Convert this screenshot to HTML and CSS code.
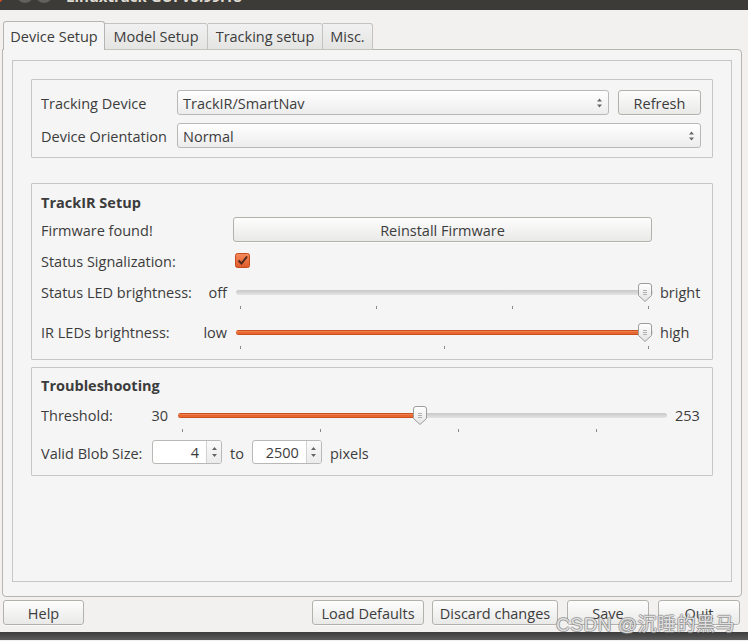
FILE: index.html
```html
<!DOCTYPE html>
<html>

<head>
    <title>Linuxtrack GUI v0.99.18</title>
    <meta charset="utf-8">
    <meta name="viewport" content="width=device-width, initial-scale=1.0">
    <link rel="stylesheet" href="styles.css">
</head>

<body>

    <header class="titlebar">
        <span class="knap luk"></span>
        <span class="knap"></span>
        <span class="knap"></span>
        <span class="titel">Linuxtrack GUI v0.99.18</span>
    </header>

    <nav class="faner">
        <button class="fane valgt">Device Setup</button>
        <button class="fane model">Model Setup</button>
        <button class="fane tracking">Tracking setup</button>
        <button class="fane misc">Misc.</button>
    </nav>

    <main class="rude">
        <div class="ramme">

            <section class="gruppe enhed">
                <div class="linje">
                    <label class="etiket">Tracking Device</label>
                    <div class="combo kort">TrackIR/SmartNav
                        <svg class="pile" width="7" height="12" viewBox="0 0 7 12"><path d="M1 4.5 L3.5 1.5 L6 4.5 Z M1 7.5 L3.5 10.5 L6 7.5 Z" /></svg>
                    </div>
                    <button class="knap-std refresh">Refresh</button>
                </div>
                <div class="linje">
                    <label class="etiket">Device Orientation</label>
                    <div class="combo lang">Normal
                        <svg class="pile" width="7" height="12" viewBox="0 0 7 12"><path d="M1 4.5 L3.5 1.5 L6 4.5 Z M1 7.5 L3.5 10.5 L6 7.5 Z" /></svg>
                    </div>
                </div>
            </section>

            <section class="gruppe trackir">
                <h2>TrackIR Setup</h2>
                <div class="linje firmware">
                    <label class="fw-etiket">Firmware found!</label>
                    <button class="knap-std reinstall">Reinstall Firmware</button>
                </div>
                <div class="linje status">
                    <label class="st-etiket">Status Signalization:</label>
                    <svg class="afkryds" width="15" height="15" viewBox="0 0 15 15">
                        <defs>
                            <linearGradient id="orange" x1="0" y1="0" x2="0" y2="1">
                                <stop offset="0" stop-color="#f58b5c" />
                                <stop offset="1" stop-color="#e0592a" />
                            </linearGradient>
                        </defs>
                        <rect x="0.5" y="0.5" width="14" height="14" rx="2" fill="url(#orange)" stroke="#c64c1e" />
                        <path d="M3.5 7.5 L6.5 10.5 L12 3.5" fill="none" stroke="#4a2a1e" stroke-width="2" />
                    </svg>
                </div>
                <div class="linje glider-linje">
                    <label class="lbl2">Status LED brightness:</label>
                    <span class="min">off</span>
                    <div class="slider">
                        <div class="groove"><div class="fill" style="width: 410px"></div></div>
                        <svg class="handle" style="left: 402px" width="14" height="19" viewBox="0 0 14 19">
                            <defs>
                                <linearGradient id="hvid" x1="0" y1="0" x2="0" y2="1">
                                    <stop offset="0" stop-color="#ffffff" />
                                    <stop offset="1" stop-color="#e4e4e4" />
                                </linearGradient>
                            </defs>
                            <path d="M3 0.5 H11 Q13.5 0.5 13.5 3 V12.5 L7 18.5 L0.5 12.5 V3 Q0.5 0.5 3 0.5 Z" fill="url(#hvid)" stroke="#9c9c9c" />
                            <path d="M5 7.5 H9 M5 9.5 H9 M5 11.5 H9" stroke="#b0b0b0" />
                        </svg>
                        <div class="ticks"><i></i><i></i><i></i><i></i></div>
                    </div>
                    <span class="max">bright</span>
                </div>
                <div class="linje glider-linje ir">
                    <label class="lbl2">IR LEDs brightness:</label>
                    <span class="min">low</span>
                    <div class="slider">
                        <div class="groove orangeg"><div class="fill" style="width: 410px"></div></div>
                        <svg class="handle" style="left: 402px" width="14" height="19" viewBox="0 0 14 19">
                            <path d="M3 0.5 H11 Q13.5 0.5 13.5 3 V12.5 L7 18.5 L0.5 12.5 V3 Q0.5 0.5 3 0.5 Z" fill="url(#hvid)" stroke="#9c9c9c" />
                            <path d="M5 7.5 H9 M5 9.5 H9 M5 11.5 H9" stroke="#b0b0b0" />
                        </svg>
                        <div class="ticks"><i></i><i></i><i></i></div>
                    </div>
                    <span class="max">high</span>
                </div>
            </section>

            <section class="gruppe fejl">
                <h2>Troubleshooting</h2>
                <div class="linje glider-linje">
                    <label class="th-etiket">Threshold:</label>
                    <span class="th-min">30</span>
                    <div class="slider lang-slider">
                        <div class="groove"><div class="fill" style="width: 240px"></div></div>
                        <svg class="handle" style="left: 235px" width="14" height="19" viewBox="0 0 14 19">
                            <path d="M3 0.5 H11 Q13.5 0.5 13.5 3 V12.5 L7 18.5 L0.5 12.5 V3 Q0.5 0.5 3 0.5 Z" fill="url(#hvid)" stroke="#9c9c9c" />
                            <path d="M5 7.5 H9 M5 9.5 H9 M5 11.5 H9" stroke="#b0b0b0" />
                        </svg>
                        <div class="ticks fast"><i></i><i></i><i></i><i></i></div>
                    </div>
                    <span class="th-max">253</span>
                </div>
                <div class="linje blob">
                    <label class="bl-etiket">Valid Blob Size:</label>
                    <div class="spin">
                        <span class="tal">4</span>
                        <span class="spin-pile">
                            <svg width="7" height="14" viewBox="0 0 7 14"><path d="M1 5 L3.5 2 L6 5 Z M1 9 L3.5 12 L6 9 Z" /></svg>
                        </span>
                    </div>
                    <span class="til">to</span>
                    <div class="spin">
                        <span class="tal">2500</span>
                        <span class="spin-pile">
                            <svg width="7" height="14" viewBox="0 0 7 14"><path d="M1 5 L3.5 2 L6 5 Z M1 9 L3.5 12 L6 9 Z" /></svg>
                        </span>
                    </div>
                    <span class="pixels">pixels</span>
                </div>
            </section>

        </div>
    </main>

    <footer class="knapper">
        <button class="knap-std help">Help</button>
        <span class="fyld"></span>
        <button class="knap-std defaults">Load Defaults</button>
        <button class="knap-std discard">Discard changes</button>
        <button class="knap-std save">Save</button>
        <button class="knap-std quit">Quit</button>
    </footer>

    <div class="bund"></div>

    <div class="vandmaerke">CSDN @沉睡的黑马</div>

</body>

</html>
```

FILE: styles.css
```css
* {
    box-sizing: border-box;
}

body {
    margin: 0;
    width: 748px;
    height: 641px;
    overflow: hidden;
    position: relative;
    background-color: #f2f1f0;
    font-family: "Open Sans", "DejaVu Sans", sans-serif;
    font-size: 14.5px;
    color: #3c3c3c;
}

button {
    font-family: inherit;
    font-size: inherit;
    color: inherit;
}

/* TITLE BAR */

.titlebar {
    height: 10px;
    overflow: hidden;
    background-color: #3c3b37;
    display: flex;
    align-items: flex-end;
}

.knap {
    width: 16px;
    height: 16px;
    border-radius: 50%;
    margin-bottom: 7px;
    margin-right: 3px;
    flex-shrink: 0;
    background: linear-gradient(#7d7c78, #5e5d59);
}

.knap.luk {
    margin-left: -12px;
    margin-right: 13px;
    background: linear-gradient(#f7774a, #e0491b);
}

.titel {
    margin-left: 11px;
    margin-bottom: 6px;
    font-size: 15px;
    line-height: 15px;
    font-weight: bold;
    color: #dfdbd2;
    white-space: nowrap;
}

/* TABS */

.faner {
    height: 40px;
    display: flex;
    align-items: flex-end;
    padding-left: 3px;
    position: relative;
    z-index: 1;
    margin-bottom: -1px;
}

.fane {
    height: 27px;
    padding: 0;
    border: 1px solid #c3c2bf;
    border-left: none;
    border-radius: 0 3px 0 0;
    background: linear-gradient(#f1f1f1, #e4e4e3);
    text-align: center;
    line-height: 24px;
}

.fane.valgt {
    width: 102px;
    height: 29px;
    border: 1px solid #b6b5b2;
    border-bottom: none;
    border-radius: 3px 3px 0 0;
    background: #f5f5f5;
    line-height: 27px;
}

.fane.model {
    width: 103px;
}

.fane.tracking {
    width: 115px;
}

.fane.misc {
    width: 50px;
}

/* PANE */

.rude {
    margin-left: 2px;
    width: 740px;
    height: 548px;
    border: 1px solid #b6b5b2;
    border-radius: 0 4px 4px 4px;
    background-color: #f5f5f5;
    padding: 10px 9px 14px 9px;
}

.ramme {
    height: 522px;
    border: 1px solid #c6c6c6;
    padding: 18px 18px 0 18px;
}

.gruppe {
    width: 682px;
    border: 1px solid #c6c6c6;
    border-radius: 1px;
}

.gruppe h2 {
    margin: 0;
    height: 18px;
    padding-top: 1px;
    font-size: 14.5px;
    line-height: 18px;
    font-weight: bold;
}

.linje {
    display: flex;
    align-items: center;
}

.linje > label,
.linje > span,
.combo,
.knap-std,
.tal {
    padding-top: 2px;
}

/* GROUP 1 */

.enhed {
    padding: 10px 10px 9px 9px;
    display: flex;
    flex-direction: column;
    gap: 8px;
}

.etiket {
    width: 136px;
    white-space: nowrap;
}

.combo {
    height: 25px;
    border: 1px solid #b9b8b5;
    border-radius: 3px;
    background: linear-gradient(#ffffff, #ececec);
    padding-left: 5px;
    line-height: 21px;
    display: flex;
    justify-content: space-between;
    align-items: center;
}

.combo.kort {
    width: 432px;
}

.combo.lang {
    width: 524px;
}

.pile {
    margin-right: 5px;
    margin-top: -2px;
    fill: #666;
}

.knap-std {
    height: 25px;
    padding-left: 0;
    padding-right: 0;
    border: 1px solid #b3b1ac;
    border-radius: 3px;
    background: linear-gradient(#fdfdfd, #e9e9e8);
    box-shadow: 0 1px 0 rgba(255, 255, 255, 0.6);
    text-align: center;
    white-space: nowrap;
}

.refresh {
    width: 83px;
    margin-left: 9px;
}

/* GROUP 2 */

.trackir {
    margin-top: 25px;
    padding: 9px 10px 8px 9px;
}

.firmware {
    margin-top: 6px;
}

.fw-etiket {
    width: 192px;
}

.reinstall {
    width: 419px;
}

.status {
    margin-top: 7px;
    height: 22px;
}

.st-etiket {
    width: 194px;
}

.afkryds {
    display: block;
}

.glider-linje {
    margin-top: 10px;
    height: 30px;
    align-items: flex-start;
    line-height: 22px;
}

.glider-linje > label,
.glider-linje > span {
    padding-top: 1px;
}

.lbl2 {
    width: 155px;
    white-space: nowrap;
}

.min {
    width: 31px;
    text-align: right;
    margin-right: 9px;
}

.max {
    margin-left: 7px;
}

.slider {
    position: relative;
    width: 417px;
    height: 30px;
}

.groove {
    position: absolute;
    top: 9px;
    left: 0;
    right: 0;
    height: 5px;
    border-radius: 3px;
    background: linear-gradient(#c8c8c8, #e4e4e4);
    overflow: hidden;
}

.fill {
    height: 100%;
}

.groove .fill {
    background: transparent;
}

.orangeg .fill,
.lang-slider .fill {
    background: linear-gradient(#c9501f 0, #c9501f 1px, #f07f4c 1px, #f07f4c 2px, #e86630 2px, #e86630 4px, #c9501f 4px);
}

.handle {
    position: absolute;
    top: 2px;
}

.ticks {
    position: absolute;
    top: 25px;
    left: 0;
    right: 0;
    padding: 0 4px;
    display: flex;
    justify-content: space-between;
}

.ticks i {
    display: block;
    width: 1px;
    height: 3px;
    background-color: #8a8a8a;
}

.ticks.fast {
    justify-content: flex-start;
    gap: 137px;
}

/* GROUP 3 */

.fejl {
    margin-top: 7px;
    padding: 8px 10px 11px 9px;
}

.th-etiket {
    width: 110px;
}

.th-min {
    width: 17px;
    text-align: right;
    margin-right: 10px;
}

.slider.lang-slider {
    width: 489px;
}

.th-max {
    margin-left: 8px;
}

.blob {
    margin-top: 6px;
    height: 24px;
}

.bl-etiket {
    width: 111px;
}

.spin {
    width: 70px;
    height: 24px;
    border: 1px solid #b9b8b5;
    border-radius: 3px;
    background: #ffffff;
    display: flex;
    overflow: hidden;
}

.tal {
    flex: 1;
    text-align: right;
    padding-right: 7px;
    line-height: 20px;
}

.spin-pile {
    width: 15px;
    border-left: 1px solid #d2d2d2;
    background: linear-gradient(#fafafa, #ebebeb);
    display: flex;
    align-items: center;
    justify-content: center;
    fill: #666;
}

.til {
    margin: 0 8px;
}

.pixels {
    margin-left: 8px;
}

/* BUTTONS */

.knapper {
    margin-top: 3px;
    height: 25px;
    display: flex;
    padding: 0 8px 0 3px;
}

.fyld {
    flex: 1;
}

.help {
    width: 81px;
}

.defaults {
    width: 112px;
}

.discard {
    width: 126px;
    margin-left: 8px;
}

.save {
    width: 82px;
    margin-left: 9px;
}

.quit {
    width: 82px;
    margin-left: 9px;
}

.bund {
    margin-top: 7px;
    height: 8px;
    background: linear-gradient(#3d3d3d, #5c5c5c);
}

.vandmaerke {
    position: absolute;
    right: 13px;
    top: 609px;
    font-family: "Liberation Sans", "Noto Sans CJK SC", sans-serif;
    font-size: 19px;
    letter-spacing: 0.5px;
    color: rgba(255, 255, 255, 0.75);
    text-shadow: -1px 0 0 rgba(120, 120, 120, 0.6), 1px 0 0 rgba(120, 120, 120, 0.6), 0 -1px 0 rgba(120, 120, 120, 0.6), 0 1px 0 rgba(120, 120, 120, 0.6);
    white-space: nowrap;
}
```
